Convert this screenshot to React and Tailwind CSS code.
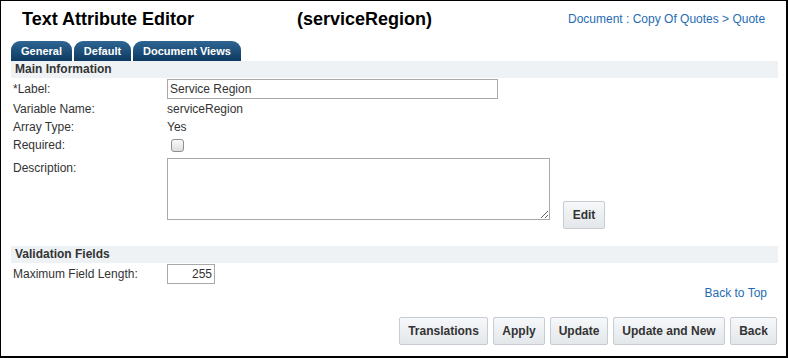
const Btn = ({ children, w }) => (
  <button
    type="button"
    className={`h-[28px] ${w} rounded-[2px] border border-[#c6ccd1] bg-gradient-to-b from-[#f6f8fa] to-[#e3e7ea] text-[12px] font-bold text-[#333] leading-none`}
  >
    {children}
  </button>
);

const Tab = ({ children, w }) => (
  <div
    className={`h-[20px] ${w} rounded-t-[9px] bg-gradient-to-b from-[#2f6694] to-[#0c3a60] text-white text-[11px] font-bold flex items-center justify-center`}
  >
    {children}
  </div>
);

const App = () => {
  return (
    <div
      className="w-[788px] h-[358px] bg-white border-l border-t border-r-2 border-b-2 border-black overflow-hidden text-[#333]"
      style={{ fontFamily: '"Liberation Sans", Arial, sans-serif' }}
    >
      {/* title bar */}
      <div className="h-[40px] flex items-start">
        <h1 className="ml-[21px] mt-[7px] w-[275px] text-[18px] leading-[22px] font-bold text-black">
          Text Attribute Editor
        </h1>
        <h1 className="mt-[7px] w-[271px] text-[18px] leading-[22px] font-bold text-black">
          (serviceRegion)
        </h1>
        <a href="#" className="mt-[11px] text-[12px] leading-[14px] text-[#1f6cb3]">
          Document : Copy Of Quotes &gt; Quote
        </a>
      </div>

      <div className="ml-[10px] w-[767px]">
        {/* tabs */}
        <div className="flex gap-[2px]">
          <Tab w="w-[61px]">General</Tab>
          <Tab w="w-[57px]">Default</Tab>
          <Tab w="w-[108px]">Document Views</Tab>
        </div>

        {/* main information */}
        <div className="h-[17px] bg-[#eef2f5] pl-[4px] text-[12px] font-bold leading-[17px]">
          Main Information
        </div>

        <div className="text-[12px] leading-[14px]">
          <div className="mt-[1px] flex items-center h-[20px]">
            <div className="w-[156px] pl-[2px]">*Label:</div>
            <input
              defaultValue="Service Region"
              className="h-[20px] w-[331px] border border-[#a9a9a9] px-[2px] text-[12px] text-[#333] outline-none"
            />
          </div>
          <div className="flex items-center h-[19px]">
            <div className="w-[156px] pl-[2px]">Variable Name:</div>
            <div>serviceRegion</div>
          </div>
          <div className="flex items-center h-[17px]">
            <div className="w-[156px] pl-[2px]">Array Type:</div>
            <div>Yes</div>
          </div>
          <div className="flex items-center h-[20px]">
            <div className="w-[156px] pl-[2px]">Required:</div>
            <div className="ml-[4px] h-[13px] w-[13px] rounded-[3px] border border-[#8f8f8f] bg-gradient-to-b from-[#fafafa] to-[#dedede]" />
          </div>
          <div className="mt-[3px] flex items-start">
            <div className="w-[156px] pl-[2px] pt-[3px]">Description:</div>
            <textarea className="h-[62px] w-[383px] border border-[#a9a9a9] outline-none resize" />
            <button
              type="button"
              className="ml-[13px] mt-[43px] h-[28px] w-[42px] rounded-[2px] border border-[#c6ccd1] bg-gradient-to-b from-[#f6f8fa] to-[#e3e7ea] text-[12px] font-bold text-[#333] leading-none"
            >
              Edit
            </button>
          </div>
        </div>

        {/* validation fields */}
        <div className="mt-[17px] h-[17px] bg-[#eef2f5] pl-[4px] text-[12px] font-bold leading-[17px]">
          Validation Fields
        </div>
        <div className="mt-[1px] flex items-center h-[20px] text-[12px]">
          <div className="w-[156px] pl-[2px]">Maximum Field Length:</div>
          <input
            defaultValue="255"
            className="h-[20px] w-[48px] border border-[#a9a9a9] px-[2px] text-right text-[12px] text-[#333] outline-none"
          />
        </div>

        <div className="mt-[2px] flex justify-end pr-[11px]">
          <a href="#" className="text-[12px] leading-[14px] text-[#1f6cb3]">
            Back to Top
          </a>
        </div>

        <div className="mt-[17px] flex justify-end gap-[5px] pr-[1px]">
          <Btn w="w-[89px]">Translations</Btn>
          <Btn w="w-[52px]">Apply</Btn>
          <Btn w="w-[58px]">Update</Btn>
          <Btn w="w-[112px]">Update and New</Btn>
          <Btn w="w-[47px]">Back</Btn>
        </div>
      </div>
    </div>
  );
};

export default App;
